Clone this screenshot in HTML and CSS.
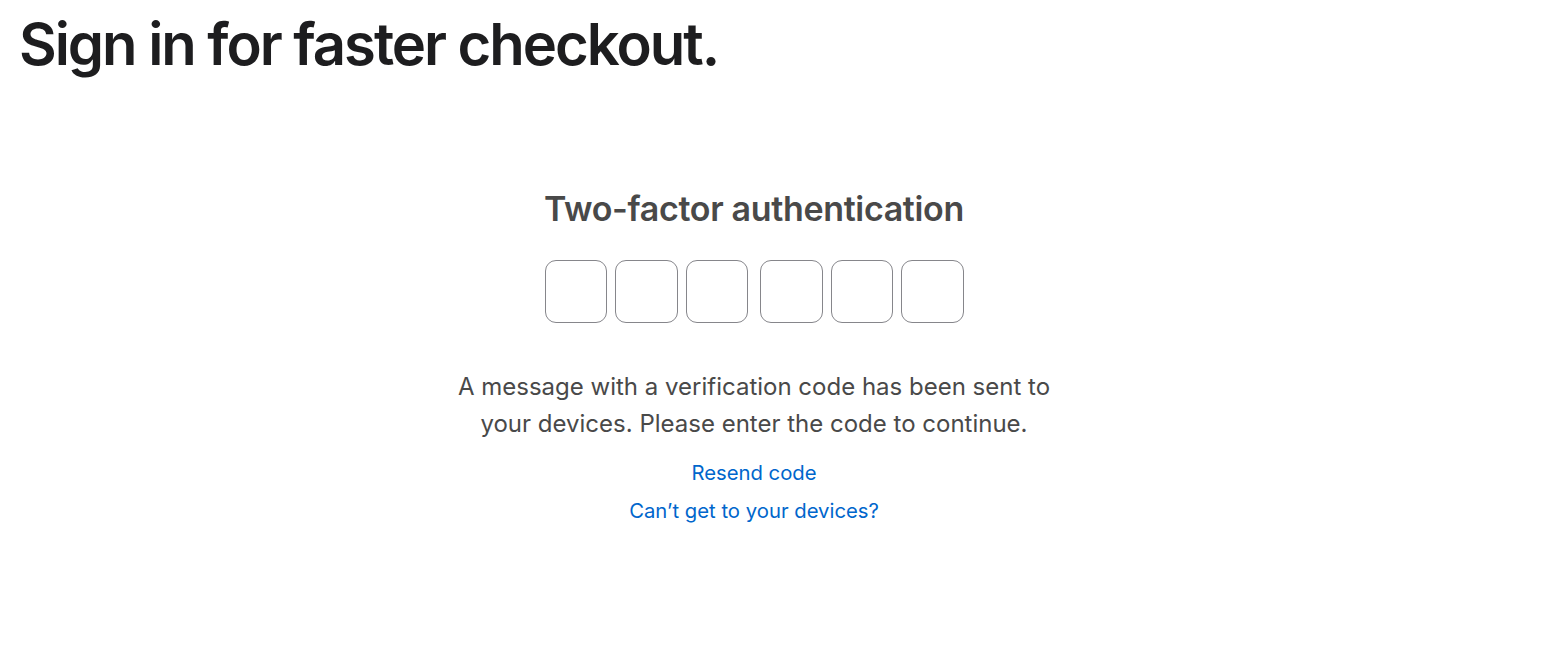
FILE: index.html
```html
<html>
    <head>
        <title>Sign in</title>
        <link rel="stylesheet" href="styles.css">
    </head>
    <body>
        <h1 class="page-title">Sign in for faster checkout.</h1>
        <div class="auth">
            <h2 class="auth-title">Two-factor authentication</h2>
            <form class="code" id="code">
                <div class="code-group">
                    <input class="digit" type="text" maxlength="1">
                    <input class="digit" type="text" maxlength="1">
                    <input class="digit" type="text" maxlength="1">
                </div>
                <div class="code-group">
                    <input class="digit" type="text" maxlength="1">
                    <input class="digit" type="text" maxlength="1">
                    <input class="digit" type="text" maxlength="1">
                </div>
            </form>
            <p class="auth-text">A message with a verification code has been sent to your devices. Please enter the code to continue.</p>
            <a class="link" href="#">Resend code</a>
            <a class="link" href="#">Can’t get to your devices?</a>
        </div>
    </body>
</html>
```

FILE: styles.css
```css
body{
    margin: 0;
    background: #fff;
    font-family: Inter, "Noto Sans", sans-serif;
    color: #1d1d1f;
}
.page-title{
    margin: 0;
    padding: 9px 0 0 19px;
    font-size: 58px;
    line-height: 70px;
    font-weight: 600;
    letter-spacing: -0.035em;
}
.auth{
    display: flex;
    flex-direction: column;
    align-items: center;
    padding: 108px 50px 0 0;
}
.auth-title{
    margin: 0;
    font-size: 34px;
    line-height: 44px;
    font-weight: 600;
    color: #494949;
    letter-spacing: -0.01em;
}
.code{
    display: flex;
    gap: 12px;
    margin: 29px 0 0;
}
.code-group{
    display: flex;
    gap: 8px;
}
.digit{
    width: 62.5px;
    height: 63px;
    box-sizing: border-box;
    border: 1px solid #86868b;
    border-radius: 11px;
    background: #fff;
    padding: 0;
    text-align: center;
    font-size: 28px;
    font-family: inherit;
}
.auth-text{
    margin: 45px 0 0;
    width: 620px;
    text-align: center;
    font-size: 24px;
    line-height: 37px;
    color: #494949;
    letter-spacing: 0;
}
.link{
    display: block;
    color: #0066cc;
    text-decoration: none;
    font-size: 20.3px;
    line-height: 38px;
}
.auth-text + .link{
    margin-top: 12px;
}
```
